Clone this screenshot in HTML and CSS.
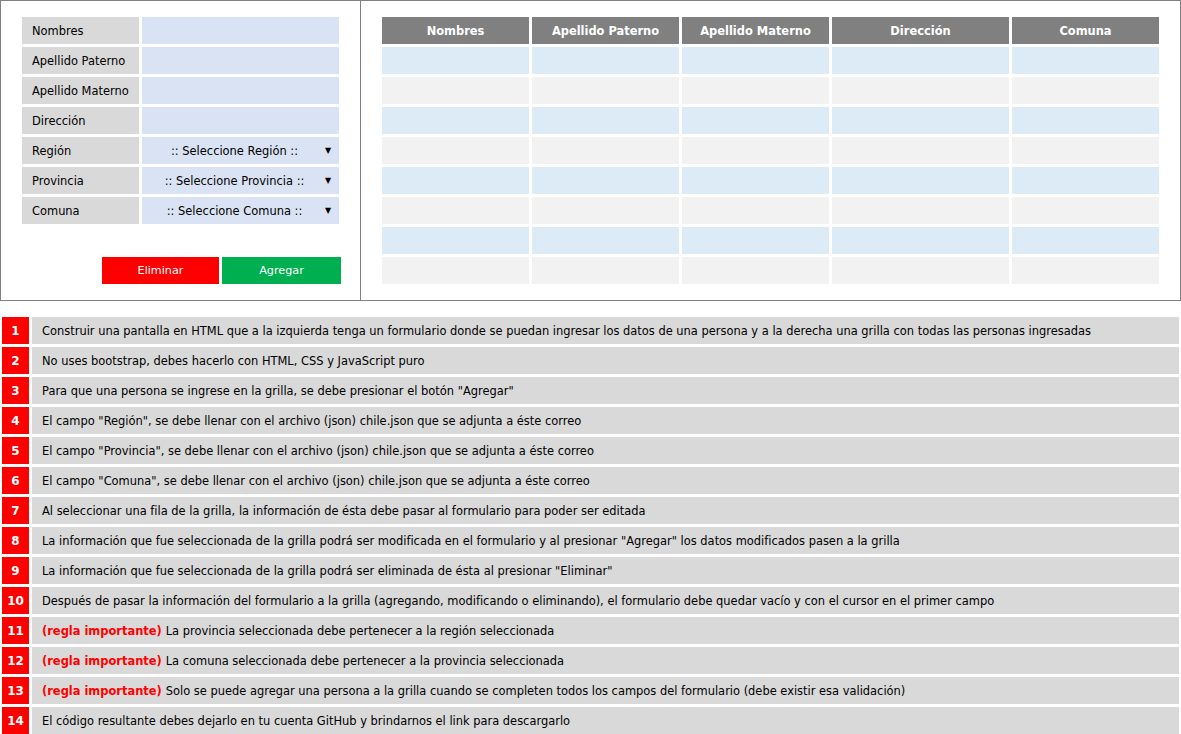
FILE: index.html
```html
<!DOCTYPE html>
<html lang="es">
<head>
<meta charset="utf-8">
<title>Formulario de personas</title>
<link rel="stylesheet" href="styles.css">
</head>
<body>
<div class="page">
  <div class="top">
    <div class="form-panel">
      <div class="form-grid">
        <div class="label">Nombres</div><div class="field"></div>
        <div class="label">Apellido Paterno</div><div class="field"></div>
        <div class="label">Apellido Materno</div><div class="field"></div>
        <div class="label">Dirección</div><div class="field"></div>
        <div class="label">Región</div><div class="field select"><span class="sel-text">:: Seleccione Región ::</span><span class="arrow">▼</span></div>
        <div class="label">Provincia</div><div class="field select"><span class="sel-text">:: Seleccione Provincia ::</span><span class="arrow">▼</span></div>
        <div class="label">Comuna</div><div class="field select"><span class="sel-text">:: Seleccione Comuna ::</span><span class="arrow">▼</span></div>
      </div>
      <div class="buttons">
        <div class="btn btn-red">Eliminar</div>
        <div class="btn btn-green">Agregar</div>
      </div>
    </div>
    <div class="grid-panel">
      <div class="grid">
        <div class="th">Nombres</div><div class="th">Apellido Paterno</div><div class="th">Apellido Materno</div><div class="th">Dirección</div><div class="th">Comuna</div>
        <div class="td a"></div><div class="td a"></div><div class="td a"></div><div class="td a"></div><div class="td a"></div>
        <div class="td b"></div><div class="td b"></div><div class="td b"></div><div class="td b"></div><div class="td b"></div>
        <div class="td a"></div><div class="td a"></div><div class="td a"></div><div class="td a"></div><div class="td a"></div>
        <div class="td b"></div><div class="td b"></div><div class="td b"></div><div class="td b"></div><div class="td b"></div>
        <div class="td a"></div><div class="td a"></div><div class="td a"></div><div class="td a"></div><div class="td a"></div>
        <div class="td b"></div><div class="td b"></div><div class="td b"></div><div class="td b"></div><div class="td b"></div>
        <div class="td a"></div><div class="td a"></div><div class="td a"></div><div class="td a"></div><div class="td a"></div>
        <div class="td b"></div><div class="td b"></div><div class="td b"></div><div class="td b"></div><div class="td b"></div>
      </div>
    </div>
  </div>
  <div class="list">
    <div class="item"><div class="num">1</div><div class="text">Construir una pantalla en HTML que a la izquierda tenga un formulario donde se puedan ingresar los datos de una persona y a la derecha una grilla con todas las personas ingresadas</div></div>
    <div class="item"><div class="num">2</div><div class="text">No uses bootstrap, debes hacerlo con HTML, CSS y JavaScript puro</div></div>
    <div class="item"><div class="num">3</div><div class="text">Para que una persona se ingrese en la grilla, se debe presionar el botón "Agregar"</div></div>
    <div class="item"><div class="num">4</div><div class="text">El campo "Región", se debe llenar con el archivo (json) chile.json que se adjunta a éste correo</div></div>
    <div class="item"><div class="num">5</div><div class="text">El campo "Provincia", se debe llenar con el archivo (json) chile.json que se adjunta a éste correo</div></div>
    <div class="item"><div class="num">6</div><div class="text">El campo "Comuna", se debe llenar con el archivo (json) chile.json que se adjunta a éste correo</div></div>
    <div class="item"><div class="num">7</div><div class="text">Al seleccionar una fila de la grilla, la información de ésta debe pasar al formulario para poder ser editada</div></div>
    <div class="item"><div class="num">8</div><div class="text">La información que fue seleccionada de la grilla podrá ser modificada en el formulario y al presionar "Agregar" los datos modificados pasen a la grilla</div></div>
    <div class="item"><div class="num">9</div><div class="text">La información que fue seleccionada de la grilla podrá ser eliminada de ésta al presionar "Eliminar"</div></div>
    <div class="item"><div class="num">10</div><div class="text">Después de pasar la información del formulario a la grilla (agregando, modificando o eliminando), el formulario debe quedar vacío y con el cursor en el primer campo</div></div>
    <div class="item"><div class="num">11</div><div class="text"><span class="important">(regla importante)</span> La provincia seleccionada debe pertenecer a la región seleccionada</div></div>
    <div class="item"><div class="num">12</div><div class="text"><span class="important">(regla importante)</span> La comuna seleccionada debe pertenecer a la provincia seleccionada</div></div>
    <div class="item"><div class="num">13</div><div class="text"><span class="important">(regla importante)</span> Solo se puede agregar una persona a la grilla cuando se completen todos los campos del formulario (debe existir esa validación)</div></div>
    <div class="item"><div class="num">14</div><div class="text">El código resultante debes dejarlo en tu cuenta GitHub y brindarnos el link para descargarlo</div></div>
  </div>
</div>
</body>
</html>
```
FILE: styles.css
```css
html, body {
  margin: 0;
  padding: 0;
  background: #ffffff;
}
body {
  font-family: "DejaVu Sans", Verdana, sans-serif;
  font-size: 11.45px;
  color: #000000;
}
.page {
  width: 1181px;
}
.top {
  display: flex;
  border: 1px solid #808080;
  height: 299px;
}
.form-panel {
  width: 317px;
  padding: 16px 21px 0 21px;
  border-right: 1px solid #808080;
}
.form-grid {
  display: grid;
  grid-template-columns: 117px 197px;
  grid-auto-rows: 27px;
  column-gap: 3px;
  row-gap: 3px;
}
.label {
  background: #d9d9d9;
  display: flex;
  align-items: center;
  padding-left: 10px;
}
.field {
  background: #dae3f3;
}
.select {
  display: flex;
  align-items: center;
}
.sel-text {
  flex: 1;
  text-align: center;
  padding-left: 2px;
}
.arrow {
  font-size: 8px;
  width: 8px;
  margin-right: 6px;
}
.buttons {
  display: flex;
  justify-content: flex-end;
  gap: 3px;
  margin-top: 33px;
  margin-right: -2px;
}
.btn {
  height: 27px;
  display: flex;
  align-items: center;
  justify-content: center;
  color: #ffffff;
  font-size: 11.2px;
}
.btn-red {
  width: 117px;
  background: #ff0000;
}
.btn-green {
  width: 119px;
  background: #00b050;
}
.grid-panel {
  flex: 1;
  padding: 16px 0 0 21px;
}
.grid {
  display: grid;
  grid-template-columns: 147px 147px 147px 177px 147px;
  grid-auto-rows: 27px;
  gap: 3px;
}
.th {
  background: #808080;
  color: #ffffff;
  font-weight: bold;
  display: flex;
  align-items: center;
  justify-content: center;
}
.td.a {
  background: #ddebf7;
}
.td.b {
  background: #f2f2f2;
}
.list {
  display: flex;
  flex-direction: column;
  gap: 3px;
  margin: 16px 2px 0 2px;
}
.item {
  display: flex;
  gap: 3px;
  height: 27px;
}
.num {
  width: 27px;
  background: #ff0000;
  color: #ffffff;
  font-weight: bold;
  font-size: 12px;
  display: flex;
  align-items: center;
  justify-content: center;
}
.text {
  flex: 1;
  background: #d9d9d9;
  display: flex;
  align-items: center;
  padding-left: 10px;
  white-space: nowrap;
  gap: 4px;
}
.important {
  color: #ff0000;
  font-weight: bold;
}
```
